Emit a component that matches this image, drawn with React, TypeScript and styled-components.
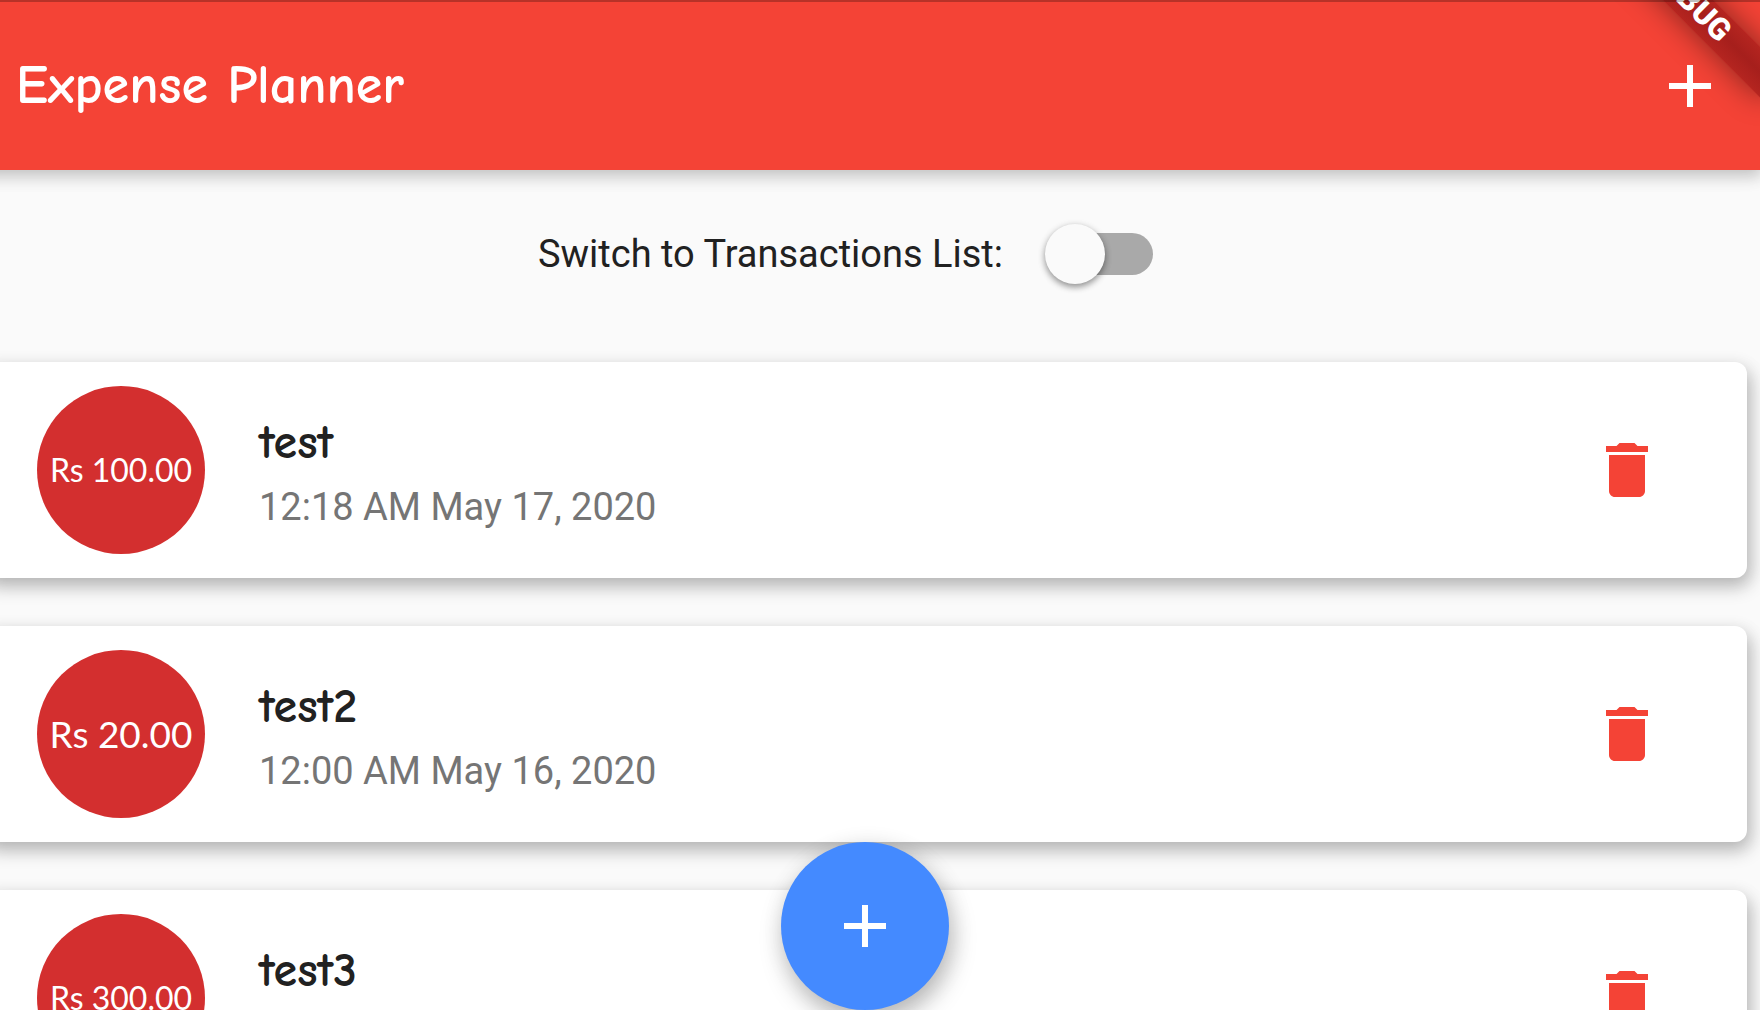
import React, { useState } from "react";
import styled, { createGlobalStyle } from "styled-components";

const GlobalStyle = createGlobalStyle`
  *, *::before, *::after { box-sizing: border-box; }
  body { margin: 0; background: #fafafa; font-family: Roboto, sans-serif; }
  button { border: 0; padding: 0; background: none; cursor: pointer; }
  h1, h2, p, ul { margin: 0; padding: 0; }
`;

const playful = `"Comic Neue", "Quicksand", Lato, sans-serif`;

const Viewport = styled.div`
  height: 100vh;
  overflow: hidden;
`;

const Screen = styled.div`
  position: relative;
  height: 100%;
  margin: 0 -2px 0 -32px;
  color: #212121;
`;

const StatusBar = styled.div`
  position: absolute;
  z-index: 4;
  inset: 0 0 auto;
  height: 2px;
  background: rgba(0, 0, 0, 0.25);
`;

const AppBar = styled.header`
  position: relative;
  z-index: 1;
  display: flex;
  align-items: center;
  justify-content: space-between;
  height: 170px;
  padding: 2px 0 0 48px;
  background: #f44336;
  color: #fff;
  box-shadow: 0 6px 15px rgba(0, 0, 0, 0.2), 0 3px 24px rgba(0, 0, 0, 0.06);
`;

const AppTitle = styled.h1`
  font: 700 54px/64px ${playful};
`;

const IconButton = styled.button`
  display: grid;
  flex: none;
  place-items: center;
  width: 144px;
  height: 144px;
  color: inherit;
`;

const Icon = styled.svg`
  display: block;
  width: 72px;
  height: 72px;
  fill: currentColor;
`;

const DebugBanner = styled.div`
  position: absolute;
  z-index: 3;
  top: -16px;
  right: -48px;
  width: 240px;
  height: 36px;
  background: linear-gradient(#b52520, #a61f1c 50%, #b52520);
  box-shadow: 0 0 30px rgba(0, 0, 0, 0.45);
  color: #fff;
  font: 900 31px/34px Roboto, sans-serif;
  text-align: center;
  transform: rotate(45deg);
  pointer-events: none;
`;

const ModeRow = styled.label`
  display: flex;
  align-items: center;
  justify-content: center;
  height: 144px;
  margin: 12px 0 36px;
  font-size: 38px;
  line-height: 48px;
  cursor: pointer;
`;

const Switch = styled.input`
  appearance: none;
  display: flex;
  align-items: center;
  width: 99px;
  height: 42px;
  margin: 0 39px 0 51px;
  border-radius: 21px;
  background: #a9a9a9;
  cursor: pointer;

  &::before {
    content: "";
    flex: none;
    width: 60px;
    height: 60px;
    margin-left: -9px;
    border-radius: 50%;
    background: #fafafa;
    box-shadow: 0 3px 6px rgba(0, 0, 0, 0.35), 0 2px 9px rgba(0, 0, 0, 0.12);
  }

  &:checked {
    background: #f9a19a;
  }

  &:checked::before {
    margin-left: 48px;
    background: #f44336;
  }
`;

const TransactionList = styled.ul`
  display: grid;
  gap: 48px;
  margin: 0 15px;
  list-style: none;
`;

const Card = styled.li`
  display: flex;
  align-items: center;
  gap: 48px;
  height: 216px;
  padding: 0 48px;
  border-radius: 12px;
  background: #fff;
  box-shadow: 3px 9px 18px rgba(0, 0, 0, 0.24), 3px 3px 18px rgba(0, 0, 0, 0.08);
`;

const AvatarSlot = styled.div`
  display: grid;
  flex: none;
  place-items: center;
  width: 180px;
`;

const Avatar = styled.div<{ $long: boolean }>`
  display: grid;
  place-items: center;
  width: 168px;
  height: 168px;
  border-radius: 50%;
  background: #d32f2f;
  color: #fff;
  font: 400 ${(p) => (p.$long ? 32 : 37)}px/48px Lato, sans-serif;
  white-space: nowrap;
`;

const Details = styled.div`
  flex: 1;
  min-width: 0;
  padding-top: 10px;
`;

const ItemTitle = styled.h2`
  font: 700 48px/64px ${playful};
`;

const ItemDate = styled.p`
  color: #757575;
  font-size: 38px;
  line-height: 64px;
`;

const DeleteButton = styled(IconButton)`
  color: #f44336;
`;

const AddFab = styled.button`
  position: absolute;
  z-index: 2;
  bottom: 0;
  left: 50%;
  display: grid;
  place-items: center;
  width: 168px;
  height: 168px;
  margin-left: -84px;
  border-radius: 50%;
  background: #448aff;
  color: #fff;
  box-shadow: 3px 12px 24px rgba(0, 0, 0, 0.25), 3px 3px 24px rgba(0, 0, 0, 0.08);
`;

const AddIcon = () => (
  <Icon viewBox="0 0 24 24" aria-hidden="true">
    <path d="M19 13h-6v6h-2v-6H5v-2h6V5h2v6h6v2z" />
  </Icon>
);

const DeleteIcon = () => (
  <Icon viewBox="0 0 24 24" aria-hidden="true">
    <path d="M6 19c0 1.1.9 2 2 2h8c1.1 0 2-.9 2-2V7H6v12zM19 4h-3.5l-1-1h-5l-1 1H5v2h14V4z" />
  </Icon>
);

const transactions = [
  { title: "test", amount: "Rs 100.00", date: "12:18 AM May 17, 2020" },
  { title: "test2", amount: "Rs 20.00", date: "12:00 AM May 16, 2020" },
  { title: "test3", amount: "Rs 300.00", date: "12:00 AM May 15, 2020" },
];

export default function App() {
  const [listMode, setListMode] = useState(false);

  return (
    <Viewport>
      <GlobalStyle />
      <Screen>
        <StatusBar />
        <AppBar>
          <AppTitle>Expense Planner</AppTitle>
          <IconButton type="button" aria-label="Add transaction">
            <AddIcon />
          </IconButton>
        </AppBar>
        <DebugBanner>DEBUG</DebugBanner>
        <main>
          <ModeRow htmlFor="list-mode">
            Switch to Transactions List:
            <Switch
              id="list-mode"
              type="checkbox"
              role="switch"
              checked={listMode}
              onChange={(e) => setListMode(e.target.checked)}
            />
          </ModeRow>
          <TransactionList>
            {transactions.map((t) => (
              <Card key={t.title}>
                <AvatarSlot>
                  <Avatar $long={t.amount.length > 8}>{t.amount}</Avatar>
                </AvatarSlot>
                <Details>
                  <ItemTitle>{t.title}</ItemTitle>
                  <ItemDate>{t.date}</ItemDate>
                </Details>
                <DeleteButton type="button" aria-label={`Delete ${t.title}`}>
                  <DeleteIcon />
                </DeleteButton>
              </Card>
            ))}
          </TransactionList>
        </main>
        <AddFab type="button" aria-label="Add transaction">
          <AddIcon />
        </AddFab>
      </Screen>
    </Viewport>
  );
}
